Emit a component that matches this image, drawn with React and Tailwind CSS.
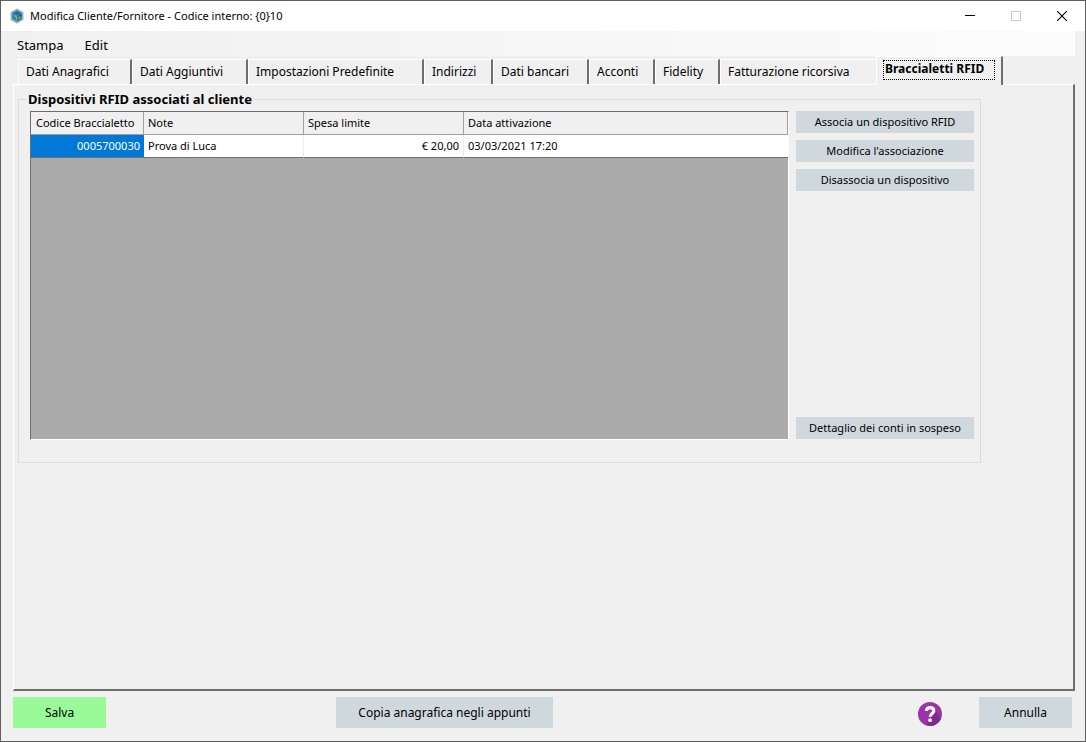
import React from "react";

const tabs = [
  { label: "Dati Anagrafici", width: "w-[114px]" },
  { label: "Dati Aggiuntivi", width: "w-[116px]" },
  { label: "Impostazioni Predefinite", width: "w-[176px]" },
  { label: "Indirizzi", width: "w-[69px]" },
  { label: "Dati bancari", width: "w-24" },
  { label: "Acconti", width: "w-[66px]" },
  { label: "Fidelity", width: "w-[65px]" },
  { label: "Fatturazione ricorsiva", width: "w-[156px]", last: true },
];

function AppIcon() {
  return (
    <svg viewBox="0 0 16 16" className="size-4 shrink-0" aria-hidden="true">
      <path d="M8 0.3 14.600 4v8L8 15.700 1.400 12V4z" fill="#a9c6cf" />
      <path d="M8 1.600 13.400 4.700v6.600L8 14.400l-5.400-3.100V4.700z" fill="#5f9fb8" />
      <path d="M8 3 12.500 5.200 8 7.500 3.500 5.200z" fill="#1d6f9c" />
      <path d="M3.500 5.800 7.600 8v5L3.500 10.600z" fill="#2b7fa6" />
      <path d="M8.400 8l4.100-2.200v4.800L8.400 13z" fill="#1f5468" />
      <path d="M5.200 7 8 8.500v3.800L6.800 11.500V9.200L5.200 8.300z" fill="#9bb86a" />
      <path d="M9.200 8.900l2.400-1.200v2.600l-2.400 1.300z" fill="#7fa65e" />
    </svg>
  );
}

function HelpIcon() {
  return (
    <svg viewBox="0 0 24 24" className="size-6" aria-hidden="true">
      <circle cx="12" cy="12" r="12" fill="#9c32a8" />
      <path d="M16.500 6.500 23 16.800A12 12 0 0 1 9 23.600L10 19z" fill="#7f2a92" />
      <path
        d="M8.400 8.900C8.500 6.900 10 5.700 12.100 5.700s3.700 1.200 3.700 3.200c0 2.600-3.600 2.700-3.600 5.900"
        fill="none"
        stroke="#fff"
        strokeWidth="3.200"
      />
      <circle cx="12.100" cy="18.200" r="1.900" fill="#fff" />
    </svg>
  );
}

function ActionButton({ children }) {
  return (
    <button type="button" className="h-[22px] w-full bg-[#cfd8dd] text-[11px] leading-4">
      {children}
    </button>
  );
}

export default function App() {
  return (
    <div className="flex min-h-screen flex-col border border-[#5f5d60] bg-[#f0f0f0] font-['Noto_Sans','Open_Sans',sans-serif] text-xs text-black">
      <header className="flex h-[30px] items-center bg-white pl-2">
        <AppIcon />
        <h1 className="ml-[5px] flex-1 text-[11px] leading-4">
          Modifica Cliente/Fornitore - Codice interno: {"{0}"}10
        </h1>
        <button type="button" aria-label="Riduci a icona" className="flex h-full w-[46px] items-center justify-center">
          <svg viewBox="0 0 10 10" className="size-[10px]">
            <path d="M0 4.500h10" stroke="#000" />
          </svg>
        </button>
        <button type="button" aria-label="Ingrandisci" disabled className="flex h-full w-[46px] items-center justify-center">
          <svg viewBox="0 0 10 10" className="size-[10px]">
            <path d="M.5.5h9v9h-9z" fill="none" stroke="#c8c8c8" />
          </svg>
        </button>
        <button type="button" aria-label="Chiudi" className="flex h-full w-[46px] items-center justify-center">
          <svg viewBox="0 0 10 10" className="size-[10px]">
            <path d="M0 0l10 10M10 0L0 10" stroke="#000" strokeWidth="1.100" />
          </svg>
        </button>
      </header>

      <nav className="mr-[10px] flex h-[25px] items-center gap-[21px] bg-linear-to-r from-[#f0f0f0] to-[#fcfcfc] pt-[3px] pl-4 text-[13px] leading-4">
        <button type="button">Stampa</button>
        <button type="button">Edit</button>
      </nav>

      <main className="mr-[10px] ml-3 flex flex-1 flex-col">
        <div role="tablist" className="flex items-end pl-[5px]">
          {tabs.map((t) => (
            <button
              key={t.label}
              type="button"
              role="tab"
              aria-selected="false"
              className={`${t.width} h-[25px] shrink-0 border-t border-l border-t-[#fdfdfd] border-l-[#fdfdfd] pl-[7px] text-left leading-4 whitespace-nowrap ${
                t.last ? "" : "border-r-2 border-r-[#6e6e6e]"
              }`}
            >
              {t.label}
            </button>
          ))}
          <button
            type="button"
            role="tab"
            aria-selected="true"
            className="z-10 -mb-px flex h-[29px] w-[127px] shrink-0 items-start border-t border-r-2 border-l border-t-white border-r-[#6e6e6e] border-l-white bg-[#f0f0f0] pt-[3px] pl-[6px] font-bold"
          >
            <span className="h-5 w-28 border border-dotted border-black pl-px text-left leading-4 whitespace-nowrap">
              Braccialetti RFID
            </span>
          </button>
        </div>

        <section
          role="tabpanel"
          aria-label="Braccialetti RFID"
          className="flex-1 border-t border-r-2 border-b-2 border-l border-t-white border-r-[#6e6e6e] border-b-[#6e6e6e] border-l-white pt-[6px] pl-1"
        >
          <fieldset className="max-w-[963px] border border-[#dcdcdc] pr-[6px] pb-[22px] pl-[11px]">
            <legend className="-ml-1 px-[2px] text-[13px] leading-4 font-bold">
              Dispositivi RFID associati al cliente
            </legend>
            <div className="flex gap-[7px] pt-1">
              <div className="min-h-[329px] flex-1 border border-t-[#6e6e6e] border-r-white border-b-white border-l-[#6e6e6e] bg-[#ababab]">
                <table className="w-full table-fixed border-separate border-spacing-0 bg-white text-left text-[11px] leading-4">
                  <colgroup>
                    <col className="w-[113px]" />
                    <col className="w-40" />
                    <col className="w-40" />
                    <col />
                  </colgroup>
                  <thead className="bg-[#f0f0f0]">
                    <tr className="h-[23px]">
                      <th className="border-r border-b border-[#a0a0a0] pl-[5px] font-normal whitespace-nowrap">
                        Codice Braccialetto
                      </th>
                      <th className="border-r border-b border-[#a0a0a0] pl-1 font-normal">Note</th>
                      <th className="border-r border-b border-[#a0a0a0] pl-1 font-normal">Spesa limite</th>
                      <th className="border-r border-b border-[#a0a0a0] pl-1 font-normal">Data attivazione</th>
                    </tr>
                  </thead>
                  <tbody>
                    <tr className="h-[23px]">
                      <td className="border-b border-[#6e6e6e] bg-[#0078d7] pr-1 text-right text-white">0005700030</td>
                      <td className="border-r border-b border-r-[#ececec] border-b-[#6e6e6e] pl-1">Prova di Luca</td>
                      <td className="border-r border-b border-r-[#ececec] border-b-[#6e6e6e] pr-1 text-right">€ 20,00</td>
                      <td className="border-b border-[#6e6e6e] pl-1">03/03/2021 17:20</td>
                    </tr>
                  </tbody>
                </table>
              </div>
              <div className="flex w-[178px] flex-col gap-[7px] pb-px">
                <ActionButton>Associa un dispositivo RFID</ActionButton>
                <ActionButton>Modifica l'associazione</ActionButton>
                <ActionButton>Disassocia un dispositivo</ActionButton>
                <div className="flex flex-1 items-end">
                  <ActionButton>Dettaglio dei conti in sospeso</ActionButton>
                </div>
              </div>
            </div>
          </fieldset>
        </section>
      </main>

      <footer className="mr-[13px] ml-3 flex h-[50px] items-start pt-[6px] leading-4">
        <button type="button" className="h-[31px] w-[93px] bg-[#98fb98]">
          Salva
        </button>
        <div className="flex flex-1 items-start justify-between pr-[37px] pl-[230px]">
          <button type="button" className="h-[31px] w-[217px] bg-[#cfd8dd]">
            Copia anagrafica negli appunti
          </button>
          <button type="button" aria-label="Aiuto" className="mt-[5px]">
            <HelpIcon />
          </button>
        </div>
        <button type="button" className="h-[31px] w-[93px] bg-[#cfd8dd]">
          Annulla
        </button>
      </footer>
    </div>
  );
}
